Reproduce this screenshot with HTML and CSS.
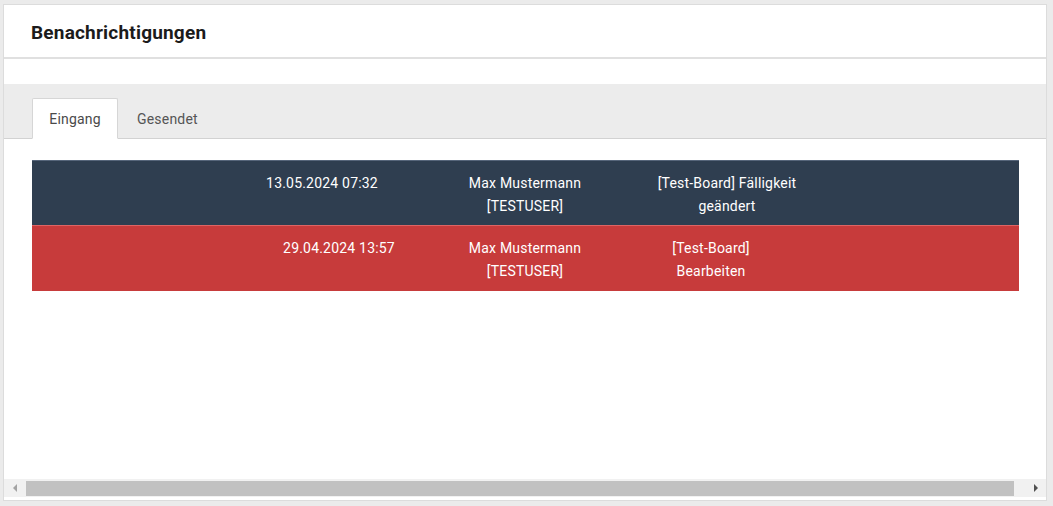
FILE: index.html
```html
<!DOCTYPE html>
<html lang="de">
<head>
<meta charset="utf-8">
<title>Benachrichtigungen</title>
<link rel="stylesheet" href="styles.css">
</head>
<body>
<div class="panel">
  <header class="panel-header">
    <h1 class="title">Benachrichtigungen</h1>
  </header>
  <div class="spacer"></div>
  <nav class="tabs">
    <div class="tab tab-active">Eingang</div>
    <div class="tab">Gesendet</div>
  </nav>
  <main class="content">
    <div class="row row-dark row-a">
      <div class="cell">13.05.2024 07:32</div>
      <div class="cell">Max Mustermann<br>[TESTUSER]</div>
      <div class="cell">[Test-Board] Fälligkeit<br>geändert</div>
    </div>
    <div class="row row-red row-b">
      <div class="cell">29.04.2024 13:57</div>
      <div class="cell">Max Mustermann<br>[TESTUSER]</div>
      <div class="cell">[Test-Board]<br>Bearbeiten</div>
    </div>
  </main>
  <div class="scrollbar">
    <div class="arrow arrow-left"></div>
    <div class="thumb"></div>
    <div class="arrow arrow-right"></div>
  </div>
</div>
</body>
</html>
```
FILE: styles.css
```css
html, body {
  margin: 0;
  padding: 0;
  background: #ebebeb;
  height: 506px;
  overflow: hidden;
}
body {
  padding: 4px 6px 5px 3px;
  box-sizing: border-box;
  font-family: "Roboto", "Liberation Sans", sans-serif;
}
.panel {
  background: #ffffff;
  border: 1px solid #dcdcdc;
  height: 497px;
  box-sizing: border-box;
  display: flex;
  flex-direction: column;
}
.panel-header {
  height: 54px;
  border-bottom: 2px solid #e0e0e0;
  display: flex;
  align-items: center;
  padding-left: 27px;
  padding-top: 2px;
  box-sizing: border-box;
}
.title {
  margin: 0;
  font-size: 19px;
  font-weight: 700;
  color: #1b1b1b;
  letter-spacing: 0.2px;
}
.spacer {
  height: 25px;
}
.tabs {
  background: #ececec;
  height: 55px;
  border-bottom: 1px solid #d2d2d2;
  box-sizing: border-box;
  display: flex;
  align-items: flex-end;
  padding-left: 28px;
}
.tab {
  height: 41px;
  display: flex;
  align-items: center;
  justify-content: center;
  padding: 0 19px;
  font-size: 14px;
  letter-spacing: 0.2px;
  color: #555;
  margin-bottom: -1px;
  box-sizing: border-box;
}
.tab-active {
  width: 86px;
  background: #fff;
  border: 1px solid #d6d6d6;
  border-bottom: 1px solid #fff;
  border-radius: 2px 2px 0 0;
  color: #4a4a4a;
}
.content {
  flex: 1;
  padding: 21px 27px 0 28px;
}
.row {
  display: flex;
  height: 65px;
  box-sizing: border-box;
  padding-top: 11px;
  color: #fff;
  font-size: 14px;
  letter-spacing: 0.2px;
  line-height: 23px;
}
.row-dark {
  background: #2f3e50;
  border-top: 1px solid #56657a;
}
.row-red {
  background: #c73b3b;
  border-top: 1px solid #de6464;
  height: 66px;
}
.cell {
  text-align: center;
}
.row-a { padding-left: 200px; }
.row-a .cell:nth-child(1) { width: 180px; }
.row-a .cell:nth-child(2) { width: 226px; }
.row-a .cell:nth-child(3) { width: 178px; }
.row-b { padding-left: 232px; }
.row-b .cell:nth-child(1) { width: 150px; }
.row-b .cell:nth-child(2) { width: 222px; }
.row-b .cell:nth-child(3) { width: 150px; }
.scrollbar {
  height: 18px;
  margin-bottom: 3px;
  background: #f1f1f1;
  display: flex;
  align-items: center;
}
.arrow {
  width: 22px;
  height: 18px;
  position: relative;
}
.arrow::after {
  content: "";
  position: absolute;
  top: 5px;
  border-top: 4px solid transparent;
  border-bottom: 4px solid transparent;
}
.arrow-left::after {
  left: 9px;
  border-right: 4px solid #a3a3a3;
}
.arrow-right::after {
  left: 10px;
  border-left: 4px solid #505050;
}
.thumb {
  flex: 1;
  height: 15px;
  background: #c1c1c1;
  margin-right: 10px;
}
```
